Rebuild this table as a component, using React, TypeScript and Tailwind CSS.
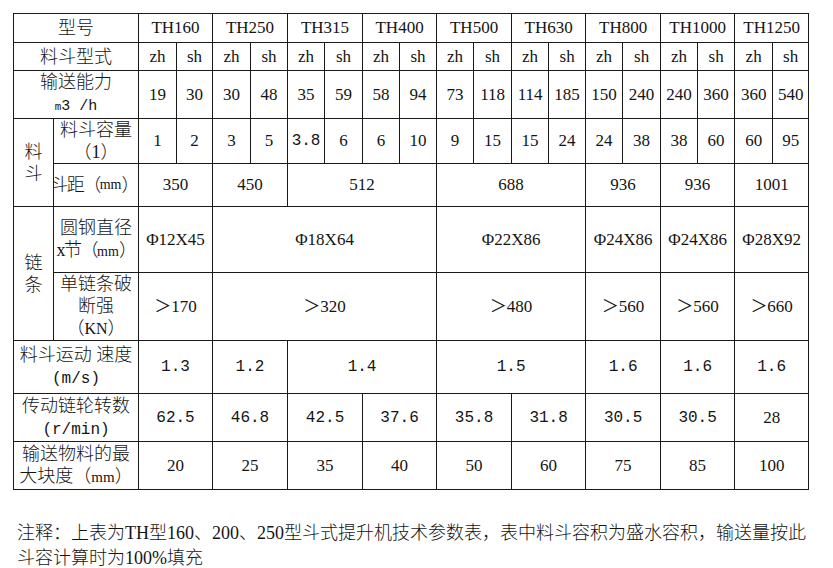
import type { ReactNode } from "react";

const colWidths = [40, 85, 38, 36, 38, 37, 37, 38, 37, 37, 37, 38, 37, 37, 37, 38, 37, 37, 38, 36];

const models = ["TH160", "TH250", "TH315", "TH400", "TH500", "TH630", "TH800", "TH1000", "TH1250"];
const capacity = [19, 30, 30, 48, 35, 59, 58, 94, 73, 118, 114, 185, 150, 240, 240, 360, 360, 540];
const volume = ["1", "2", "3", "5", "3.8", "6", "6", "10", "9", "15", "15", "24", "24", "38", "38", "60", "60", "95"];

type CellProps = {
  children?: ReactNode;
  span?: number;
  rows?: number;
  kind?: "zh" | "num" | "mono";
  className?: string;
};

function Cell({ children, span = 1, rows = 1, kind = "num", className = "" }: CellProps) {
  const size =
    kind === "zh"
      ? "text-[18px] leading-[22px] font-light whitespace-nowrap"
      : kind === "mono"
        ? "text-[16px] font-['Liberation_Mono','Noto_Sans_CJK_SC',monospace]"
        : "text-[17px]";
  return (
    <td
      colSpan={span}
      rowSpan={rows}
      className={`border border-[#1a1a1a] p-0 text-center align-middle ${size} ${className}`}
    >
      {children}
    </td>
  );
}

export default function App() {
  return (
    <div className="min-h-[568px] w-[833px] bg-white pt-[13px] text-[#141414] font-['Liberation_Serif','Noto_Sans_CJK_SC',serif]">
      <table className="ml-[13px] table-fixed border-collapse" style={{ width: 795 }}>
        <colgroup>
          {colWidths.map((w, i) => (
            <col key={i} style={{ width: w }} />
          ))}
        </colgroup>
        <tbody>
          <tr className="h-[29px]">
            <Cell span={2} kind="zh">型号</Cell>
            {models.map((m) => (
              <Cell key={m} span={2}>{m}</Cell>
            ))}
          </tr>
          <tr className="h-[28px]">
            <Cell span={2} kind="zh">料斗型式</Cell>
            {models.map((m) => [
              <Cell key={m + "zh"}>zh</Cell>,
              <Cell key={m + "sh"}>sh</Cell>,
            ])}
          </tr>
          <tr className="h-[43px]">
            <Cell span={2} kind="zh">
              输送能力
              <br />
              <span className="font-['Liberation_Mono',monospace] text-[15px]">
                <span className="text-[11px]">m</span>3 /h
              </span>
            </Cell>
            {capacity.map((v, i) => (
              <Cell key={i}>{v}</Cell>
            ))}
          </tr>
          <tr className="h-[43px]">
            <Cell rows={2} kind="zh">
              料<br />斗
            </Cell>
            <Cell kind="zh">
              料斗容量
              <br />（1）
            </Cell>
            {volume.map((v, i) => (
              <Cell key={i} kind={v.includes(".") ? "mono" : "num"}>{v}</Cell>
            ))}
          </tr>
          <tr className="h-[43px]">
            <Cell kind="zh">
              <div className="flex justify-end overflow-hidden whitespace-nowrap tracking-[-1.5px]">
                斗距（<span className="text-[14px] tracking-normal">mm</span>）
              </div>
            </Cell>
            <Cell span={2}>350</Cell>
            <Cell span={2}>450</Cell>
            <Cell span={4}>512</Cell>
            <Cell span={4}>688</Cell>
            <Cell span={2}>936</Cell>
            <Cell span={2}>936</Cell>
            <Cell span={2}>1001</Cell>
          </tr>
          <tr className="h-[66px]">
            <Cell rows={2} kind="zh">
              链<br />条
            </Cell>
            <Cell kind="zh">
              圆钢直径
              <br />
              <span className="tracking-[-1.5px]">
                x节（<span className="text-[14px] tracking-normal">mm</span>）
              </span>
            </Cell>
            <Cell span={2}>Φ12X45</Cell>
            <Cell span={6}>Φ18X64</Cell>
            <Cell span={4}>Φ22X86</Cell>
            <Cell span={2}>Φ24X86</Cell>
            <Cell span={2}>Φ24X86</Cell>
            <Cell span={2}>Φ28X92</Cell>
          </tr>
          <tr className="h-[66px]">
            <Cell kind="zh">
              单链条破
              <br />断强
              <br />（<span className="text-[16px]">KN</span>）
            </Cell>
            <Cell span={2}>＞170</Cell>
            <Cell span={6}>＞320</Cell>
            <Cell span={4}>＞480</Cell>
            <Cell span={2}>＞560</Cell>
            <Cell span={2}>＞560</Cell>
            <Cell span={2}>＞660</Cell>
          </tr>
          <tr className="h-[53px]">
            <Cell span={2} kind="zh">
              料斗运动 速度
              <br />
              <span className="font-['Liberation_Mono',monospace] text-[16px]">(m/s)</span>
            </Cell>
            <Cell span={2} kind="mono">1.3</Cell>
            <Cell span={2} kind="mono">1.2</Cell>
            <Cell span={4} kind="mono">1.4</Cell>
            <Cell span={4} kind="mono">1.5</Cell>
            <Cell span={2} kind="mono">1.6</Cell>
            <Cell span={2} kind="mono">1.6</Cell>
            <Cell span={2} kind="mono">1.6</Cell>
          </tr>
          <tr className="h-[48px]">
            <Cell span={2} kind="zh">
              传动链轮转数
              <br />
              <span className="font-['Liberation_Mono',monospace] text-[16px]">(r/min)</span>
            </Cell>
            {["62.5", "46.8", "42.5", "37.6", "35.8", "31.8", "30.5", "30.5"].map((v, i) => (
              <Cell key={i} span={2} kind="mono">{v}</Cell>
            ))}
            <Cell span={2}>28</Cell>
          </tr>
          <tr className="h-[48px]">
            <Cell span={2} kind="zh">
              输送物料的最
              <br />大块度（<span className="text-[15px]">mm</span>）
            </Cell>
            {[20, 25, 35, 40, 50, 60, 75, 85, 100].map((v) => (
              <Cell key={v} span={2}>{v}</Cell>
            ))}
          </tr>
        </tbody>
      </table>
      <p className="ml-[17px] mt-[31px] text-[18px] leading-[25px] font-light">
        注释：上表为TH型160、200、250型斗式提升机技术参数表，表中料斗容积为盛水容积，输送量按此
        <br />
        斗容计算时为100%填充
      </p>
    </div>
  );
}
